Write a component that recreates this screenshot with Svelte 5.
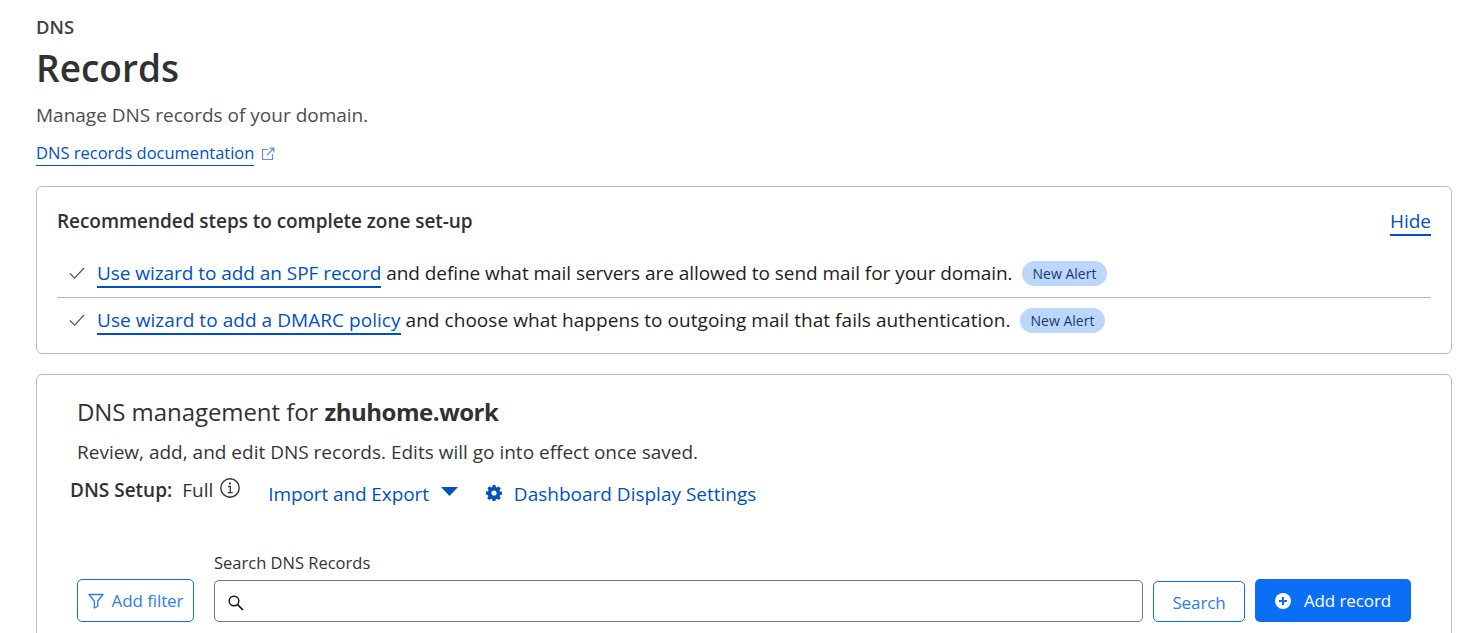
<script>
    // steps shown in the zone set-up card
    const steps = [
        { link: 'Use wizard to add an SPF record', rest: 'and define what mail servers are allowed to send mail for your domain.' },
        { link: 'Use wizard to add a DMARC policy', rest: 'and choose what happens to outgoing mail that fails authentication.' }
    ];
</script>

<main class="page">
    <div class="crumb">DNS</div>
    <h1>Records</h1>
    <p class="intro">Manage DNS records of your domain.</p>
    <div class="doc-row">
        <a href="#docs" class="link">DNS records documentation</a>
        <svg class="ext" width="14" height="14" viewBox="0 0 14 14" fill="none" stroke="#5b8fd9" stroke-width="1.2">
            <path d="M7 2.5H1.5v10h10V7" />
            <path d="M6 8l6.5-6.5M8.5 1.2h4.3v4.3" />
        </svg>
    </div>

    <section class="card steps">
        <div class="steps-head">
            <h2>Recommended steps to complete zone set-up</h2>
            <a href="#hide" class="link thick">Hide</a>
        </div>
        <ul>
            {#each steps as step}
                <li>
                    <svg class="check" width="16" height="12" viewBox="0 0 16 12" fill="none" stroke="#555" stroke-width="1.2">
                        <path d="M1 6.5l4.6 4.6L15 1" />
                    </svg>
                    <span class="step-text"><a href="#wizard" class="link thick">{step.link}</a> {step.rest}</span>
                    <span class="badge">New Alert</span>
                </li>
            {/each}
        </ul>
    </section>

    <section class="card manage">
        <h3>DNS management for <b>zhuhome.work</b></h3>
        <p class="sub">Review, add, and edit DNS records. Edits will go into effect once saved.</p>
        <div class="setup">
            <span class="setup-label">DNS Setup:</span>
            <span class="setup-val">Full</span>
            <svg class="info" width="22" height="22" viewBox="0 0 22 22" fill="none" stroke="#333">
                <circle cx="11" cy="11" r="9.2" stroke-width="1.4" />
                <path d="M9 9.5h2.3v6M8.6 15.7h5.2" stroke-width="1.3" />
                <circle cx="11" cy="6.4" r="1.1" fill="#333" stroke="none" />
            </svg>
            <span class="action first">Import and Export</span>
            <svg class="caret" width="17" height="9" viewBox="0 0 17 9"><path d="M0 0h17L8.5 9z" fill="#0051c3" /></svg>
            <svg class="gear" width="16" height="16" viewBox="0 0 16 16">
                <path fill="#0051c3" fill-rule="evenodd" d="M6.6 0h2.8l.4 2.1 1.2.5L12.8 1.4l2 2-1.2 1.8.5 1.2 2.1.4v2.8l-2.1.4-.5 1.2 1.2 1.8-2 2-1.8-1.2-1.2.5-.4 2.1H6.6l-.4-2.1-1.2-.5-1.8 1.2-2-2 1.2-1.8-.5-1.2L0 9.4V6.6l2.1-.4.5-1.2L1.4 3.2l2-2L5.2 2.6l1.2-.5zM8 5.4a2.6 2.6 0 100 5.2 2.6 2.6 0 000-5.2z" />
            </svg>
            <span class="action">Dashboard Display Settings</span>
        </div>

        <div class="search-row">
            <button class="btn outline filter">
                <svg width="16" height="16" viewBox="0 0 16 16" fill="none" stroke="#2a7cf0" stroke-width="1.3">
                    <path d="M1 1.5h14L9.7 8v5.5L6.3 15V8z" stroke-linejoin="round" />
                </svg>
                Add filter
            </button>
            <div class="search-field">
                <label for="q">Search DNS Records</label>
                <div class="input-wrap">
                    <svg width="18" height="18" viewBox="0 0 18 18" fill="none" stroke="#111" stroke-width="1.4">
                        <circle cx="7" cy="7" r="4.8" />
                        <path d="M10.5 10.5L16 16" stroke-width="1.7" />
                    </svg>
                    <input id="q" type="text" />
                </div>
            </div>
            <button class="btn outline search">Search</button>
            <button class="btn solid">
                <svg width="16" height="16" viewBox="0 0 16 16">
                    <circle cx="8" cy="8" r="8" fill="#fff" />
                    <path d="M8 4v8M4 8h8" stroke="#0b6ff5" stroke-width="2" />
                </svg>
                Add record
            </button>
        </div>
    </section>
</main>

<style>
    :global(body) {
        background: #fff;
        overflow: hidden;
        height: 633px;
    }
    .page {
        padding: 14px 8px 0 36px;
        font-family: "Open Sans", "Noto Sans", sans-serif;
        color: #313131;
        height: 619px;
        overflow: hidden;
    }
    .crumb {
        font-size: 18.5px;
        font-weight: 600;
        line-height: 26px;
        color: #404040;
    }
    h1 {
        margin: 3px 0 0;
        font-size: 37px;
        line-height: 50px;
        font-weight: 600;
    }
    .intro {
        margin: 9px 0 0;
        font-size: 19px;
        line-height: 26px;
        color: #4d4d4d;
    }
    .doc-row {
        margin-top: 13px;
        display: flex;
        align-items: center;
        gap: 7px;
        font-size: 16.5px;
        line-height: 24px;
    }
    .link {
        color: #0051c3;
        text-decoration: none;
        border-bottom: 1px solid #0051c3;
    }
    .link.thick {
        border-bottom-width: 2px;
    }
    .card {
        border: 1px solid #b9b9b9;
        border-radius: 6px;
        background: #fff;
    }
    .steps {
        margin-top: 20px;
        height: 168px;
        padding: 20px 20px 0;
        box-sizing: border-box;
    }
    .steps-head {
        display: flex;
        justify-content: space-between;
        align-items: flex-start;
    }
    h2 {
        margin: 0;
        font-size: 19px;
        line-height: 28px;
        font-weight: 600;
        letter-spacing: -0.05px;
    }
    .steps-head .link {
        font-size: 19px;
        line-height: 26px;
        padding-top: 1px;
    }
    ul {
        list-style: none;
        margin: 13px 0 0;
        padding: 0;
    }
    li {
        display: flex;
        align-items: center;
        height: 48px;
        padding-left: 12px;
        box-sizing: border-box;
    }
    li + li {
        border-top: 1px solid #b9b9b9;
        height: 45px;
    }
    .check {
        margin-right: 12px;
        flex: none;
    }
    .step-text {
        font-size: 19px;
        line-height: 26px;
        color: #1d1d1d;
        letter-spacing: -0.05px;
    }
    li + li .step-text {
        letter-spacing: 0.05px;
        margin-bottom: 1px;
    }
    .badge {
        margin-left: 9px;
        background: #bbd7fd;
        color: #1c3a66;
        border-radius: 13px;
        font-size: 14px;
        line-height: 25px;
        padding: 0 11px;
    }
    .manage {
        margin-top: 20px;
        height: 300px;
        padding: 20px 40px 0;
        box-sizing: border-box;
    }
    h3 {
        margin: 0;
        font-size: 24px;
        line-height: 34px;
        font-weight: 400;
        letter-spacing: -0.07px;
    }
    h3 b {
        font-weight: 700;
        letter-spacing: -0.47px;
    }
    .sub {
        margin: 10px 0 0;
        font-size: 19px;
        line-height: 26px;
        color: #363636;
    }
    .setup {
        display: flex;
        align-items: center;
        margin: 14px 0 0 -7px;
        height: 30px;
        font-size: 19px;
    }
    .setup-label {
        font-weight: 600;
        margin-bottom: 8px;
    }
    .setup-val {
        margin-left: 10px;
        margin-bottom: 8px;
    }
    .info {
        margin-left: 6px;
        margin-bottom: 12px;
    }
    .action {
        color: #0051c3;
    }
    .action.first {
        margin-left: 27px;
        letter-spacing: -0.1px;
    }
    .caret {
        margin-left: 12px;
        margin-top: -5px;
    }
    .gear {
        margin-left: 28px;
        margin-right: 12px;
        margin-top: -3px;
    }
    .search-row {
        display: flex;
        align-items: flex-end;
        margin-top: 42px;
    }
    .btn {
        font-family: inherit;
        font-size: 17px;
        border-radius: 5px;
        letter-spacing: -0.1px;
        display: flex;
        align-items: center;
        justify-content: center;
        box-sizing: border-box;
        cursor: pointer;
    }
    .outline {
        background: #fff;
        border: 1px solid #0b6ff5;
        color: #2a7cf0;
    }
    .filter {
        width: 117px;
        height: 43px;
        gap: 8px;
        padding: 0;
    }
    .search-field {
        width: 929px;
        margin-left: 20px;
    }
    label {
        display: block;
        font-size: 16.5px;
        line-height: 24px;
        color: #333;
        margin-bottom: 5px;
    }
    .input-wrap {
        height: 42px;
        border: 1px solid #767676;
        border-radius: 5px;
        box-sizing: border-box;
        display: flex;
        align-items: center;
        padding-left: 12px;
    }
    .input-wrap svg {
        margin-top: 4px;
    }
    input {
        flex: 1;
        border: 0;
        outline: 0;
        background: transparent;
        min-width: 0;
    }
    .search {
        width: 92px;
        margin-left: 10px;
        height: 41px;
        padding-top: 3px;
    }
    .solid {
        width: 156px;
        height: 43px;
        margin-left: 10px;
        background: #0b6ff5;
        border: 0;
        color: #fff;
        gap: 13px;
    }
</style>
